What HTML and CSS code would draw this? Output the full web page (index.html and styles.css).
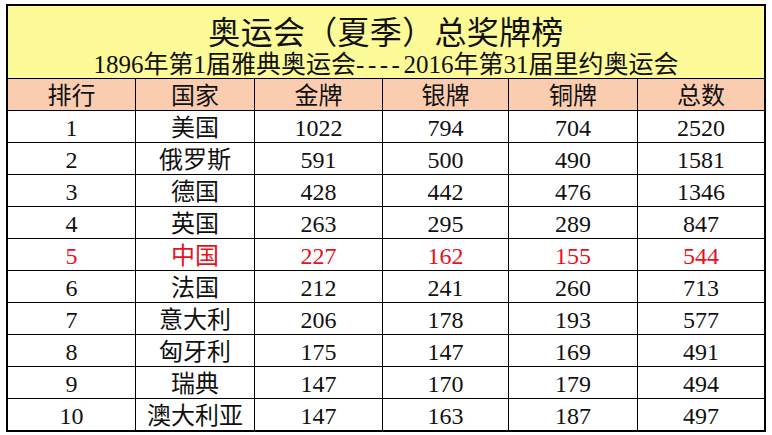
FILE: index.html
```html
<!DOCTYPE html>
<html lang="zh-CN">
<head>
<meta charset="utf-8">
<title>奥运会（夏季）总奖牌榜</title>
<link rel="stylesheet" href="styles.css">
</head>
<body>
<div class="page">
<table class="medals">
<colgroup>
<col class="c1"><col class="c2"><col class="c3"><col class="c4"><col class="c5"><col class="c6">
</colgroup>
<thead>
<tr><th colspan="6" class="title">
<div class="title-main">奥运会（夏季）总奖牌榜</div>
<div class="title-sub">1896年第1届雅典奥运会<span class="dash">----</span>2016年第31届里约奥运会</div>
</th></tr>
<tr class="head"><th>排行</th><th>国家</th><th>金牌</th><th>银牌</th><th>铜牌</th><th>总数</th></tr>
</thead>
<tbody>
<tr><td>1</td><td>美国</td><td>1022</td><td>794</td><td>704</td><td>2520</td></tr>
<tr><td>2</td><td>俄罗斯</td><td>591</td><td>500</td><td>490</td><td>1581</td></tr>
<tr><td>3</td><td>德国</td><td>428</td><td>442</td><td>476</td><td>1346</td></tr>
<tr><td>4</td><td>英国</td><td>263</td><td>295</td><td>289</td><td>847</td></tr>
<tr class="hl"><td>5</td><td>中国</td><td>227</td><td>162</td><td>155</td><td>544</td></tr>
<tr><td>6</td><td>法国</td><td>212</td><td>241</td><td>260</td><td>713</td></tr>
<tr><td>7</td><td>意大利</td><td>206</td><td>178</td><td>193</td><td>577</td></tr>
<tr><td>8</td><td>匈牙利</td><td>175</td><td>147</td><td>169</td><td>491</td></tr>
<tr><td>9</td><td>瑞典</td><td>147</td><td>170</td><td>179</td><td>494</td></tr>
<tr class="last"><td>10</td><td>澳大利亚</td><td>147</td><td>163</td><td>187</td><td>497</td></tr>
</tbody>
</table>
</div>
</body>
</html>
```
FILE: styles.css
```css
html, body {
  margin: 0;
  padding: 0;
  background: #ffffff;
}
.page {
  padding: 4px 6px 0 6px;
}
.medals {
  width: 760px;
  table-layout: fixed;
  border-collapse: separate;
  border-spacing: 0;
  border: 2px solid #000;
  font-family: "Liberation Serif", "Noto Sans CJK SC", serif;
  color: #111111;
}
.c1 { width: 128px; }
.c2 { width: 119px; }
.c3 { width: 128px; }
.c4 { width: 126px; }
.c5 { width: 129px; }
.c6 { width: 126px; }
.medals th, .medals td {
  padding: 0;
  text-align: center;
  border-right: 1px solid #000;
  border-bottom: 1px solid #000;
  box-sizing: border-box;
  font-weight: 400;
}
.medals th:last-child, .medals td:last-child {
  border-right: none;
}
.title {
  background: #fdfb98;
  height: 72px;
  vertical-align: top;
}
.title-main {
  font-size: 32px;
  line-height: 36px;
  padding-top: 9px;
  letter-spacing: 0.3px;
}
.title-sub {
  font-size: 25px;
  line-height: 27px;
}
.dash {
  letter-spacing: 3.5px;
}
.head th {
  background: #fbcdb0;
  height: 32px;
  font-size: 24px;
  line-height: 28px;
  padding-top: 3px;
}
.medals td {
  height: 32px;
  font-size: 24px;
  line-height: 28px;
  padding-top: 3px;
}
.medals tr.last td {
  border-bottom: none;
  height: 31px;
}
.hl td {
  color: #e8101c;
}
```
